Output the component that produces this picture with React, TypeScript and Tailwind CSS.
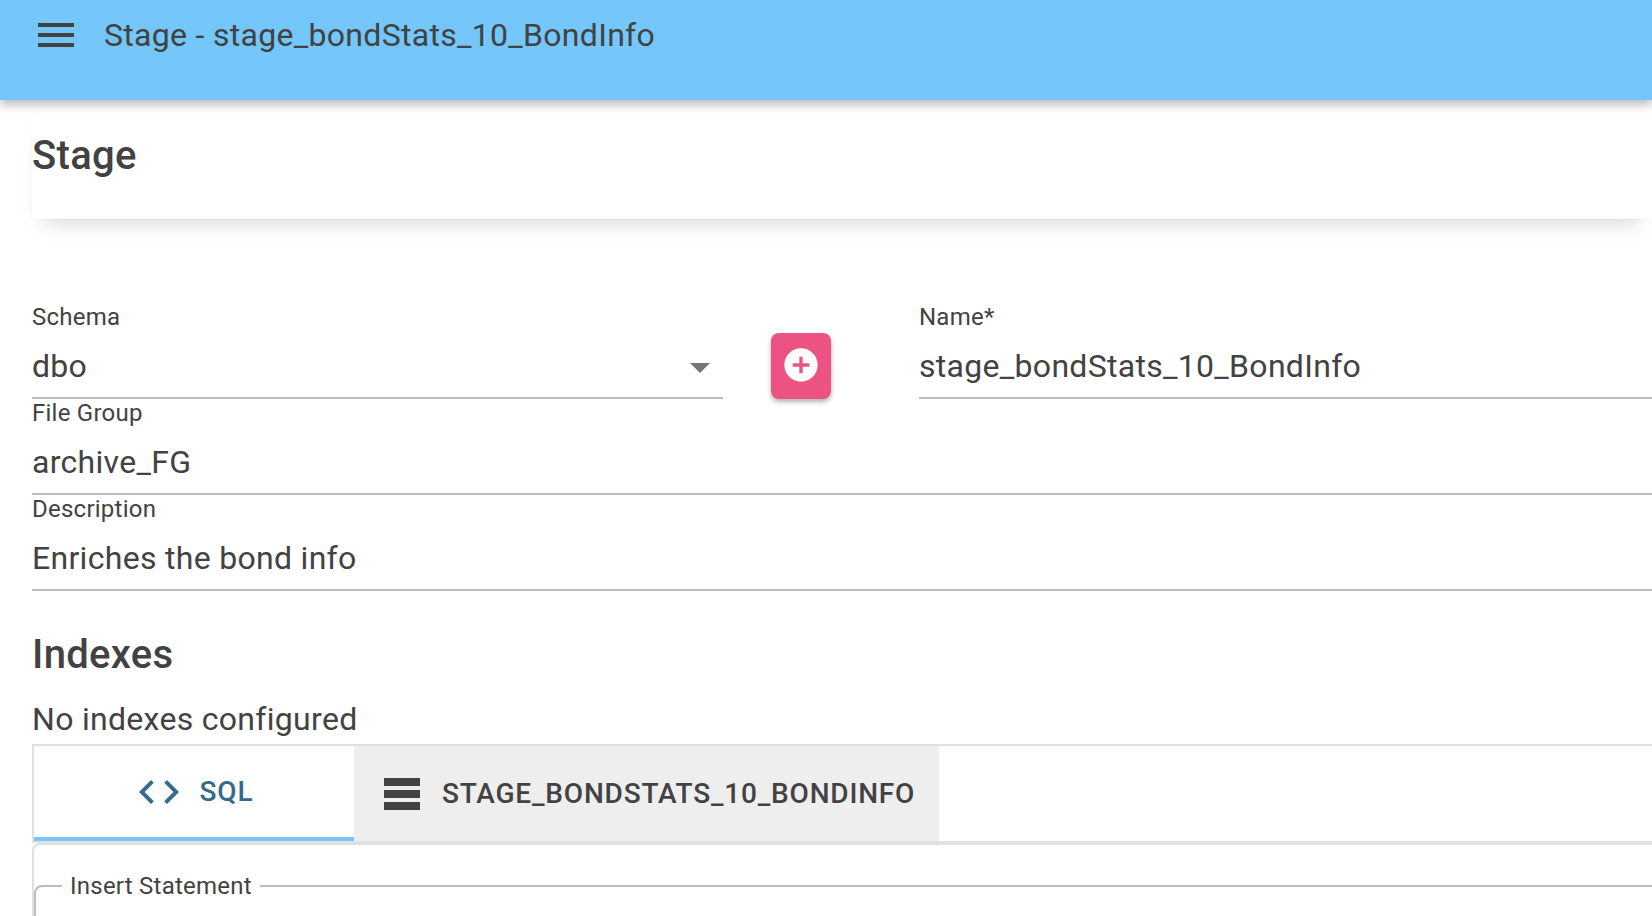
import React from 'react';

const Field = ({ label, value, className = '' }: { label: string; value: string; className?: string }) => (
  <div className={`h-[96px] border-b-2 border-[#bdbdbd] ${className}`}>
    <div className="h-[28px] text-[24px] leading-[28px] tracking-[0.01em]">{label}</div>
    <div className="mt-[11px] text-[32px] leading-[48px] tracking-[0.3px]">{value}</div>
  </div>
);

const App: React.FC = () => {
  return (
    <div className="h-[916px] w-full overflow-hidden bg-white font-['Roboto',sans-serif] text-[#424242]">
      {/* Header */}
      <header className="relative z-10 flex h-[100px] items-start bg-[#74c6fb] pt-[11px] pl-[32px] shadow-[0_4px_10px_rgba(0,0,0,0.3)]">
        <svg width="48" height="48" viewBox="0 0 24 24" fill="currentColor">
          <path d="M3 18h18v-2H3v2zm0-5h18v-2H3v2zm0-7v2h18V6H3z" />
        </svg>
        <h1 className="ml-[24px] text-[32px] leading-[48px] tracking-[0.3px]">Stage - stage_bondStats_10_BondInfo</h1>
      </header>

      {/* Page title panel */}
      <div className="mt-[18px] ml-[32px] h-[101px] bg-white pt-[14px] shadow-[0_14px_22px_-12px_rgba(0,0,0,0.18),0_0_2px_rgba(0,0,0,0.04)]">
        <h2 className="text-[40px] leading-[48px] font-medium tracking-[0.3px]">Stage</h2>
      </div>

      {/* Form */}
      <div className="mt-[84px] pl-[32px]">
        <div className="flex items-start">
          <div className="relative w-[691px]">
            <Field label="Schema" value="dbo" />
            <svg className="absolute top-[60px] left-[658px]" width="20" height="10" viewBox="0 0 20 10" fill="#757575">
              <path d="M0 0h20L10 10z" />
            </svg>
          </div>
          <button className="mt-[30px] ml-[48px] flex h-[66px] w-[60px] items-center justify-center rounded-lg bg-[#ec5282] pb-[2px] text-white shadow-[0_3px_5px_rgba(0,0,0,0.3)]">
            <svg width="40" height="40" viewBox="0 0 24 24" fill="currentColor">
              <path d="M12 2C6.48 2 2 6.48 2 12s4.48 10 10 10 10-4.48 10-10S17.52 2 12 2zm5 11h-4v4h-2v-4H7v-2h4V7h2v4h4v2z" />
            </svg>
          </button>
          <Field label="Name*" value="stage_bondStats_10_BondInfo" className="ml-[88px] flex-1" />
        </div>
        <Field label="File Group" value="archive_FG" />
        <Field label="Description" value="Enriches the bond info" />

        <h2 className="mt-[40px] text-[40px] leading-[48px] font-medium tracking-[0.3px]">Indexes</h2>
        <p className="mt-[16px] text-[32px] leading-[48px] tracking-[0.3px]">No indexes configured</p>

        {/* Tabs */}
        <div className="mt-[1px] flex border-t-2 border-b-2 border-l-2 border-[#e0e0e0]">
          <div className="flex h-[95px] w-[320px] items-center justify-center gap-[17px] border-b-4 border-[#74c6fb] text-[#366a8a]">
            <svg width="48" height="48" viewBox="0 0 24 24" fill="currentColor">
              <path d="M9.4 16.6L4.8 12l4.6-4.6L8 6l-6 6 6 6 1.4-1.4zm5.2 0l4.6-4.6-4.6-4.6L16 6l6 6-6 6-1.4-1.4z" />
            </svg>
            <span className="text-[28px] font-medium tracking-[0.8px]">SQL</span>
          </div>
          <div className="flex h-[95px] w-[585px] items-center gap-[22px] bg-[#eeeeee] pl-[30px]">
            <svg width="36" height="32" viewBox="0 0 36 32" fill="currentColor">
              <rect width="36" height="8" />
              <rect y="12" width="36" height="8" />
              <rect y="24" width="36" height="8" />
            </svg>
            <span className="text-[28px] font-medium tracking-[0.8px]">STAGE_BONDSTATS_10_BONDINFO</span>
          </div>
        </div>

        {/* Tab content */}
        <div className="rounded-tl-lg border-t-2 border-l-2 border-[#e0e0e0] pt-[27px]">
          <fieldset className="h-[200px] rounded-tl-lg border-t-2 border-l-2 border-[#bdbdbd]">
            <legend className="ml-[26px] px-[8px] text-[24px] leading-[28px] tracking-[0.01em]">Insert Statement</legend>
          </fieldset>
        </div>
      </div>
    </div>
  );
};

export default App;
